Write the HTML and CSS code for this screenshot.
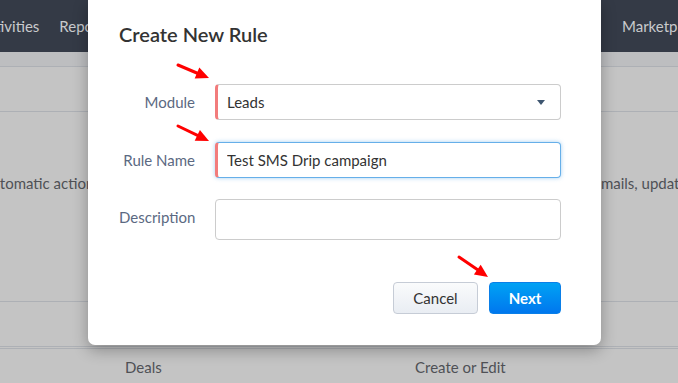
FILE: index.html
```html
<!DOCTYPE html>
<html lang="en">
<head>
    <meta charset="UTF-8">
    <meta name="viewport" content="width=device-width, initial-scale=1.0">
    <title>Create New Rule</title>
    <link rel="stylesheet" href="styles.css">
</head>
<body>
    <div class="app">
        <nav class="nav">
            <div class="nav-left">
                <span>Activities</span>
                <span>Reports</span>
            </div>
            <div class="nav-right">
                <span>Marketplace</span>
            </div>
        </nav>

        <div class="strip"></div>
        <div class="row row-head"></div>
        <div class="row row-desc">
            <span class="desc-left">automatic actions when records are created</span>
            <span class="desc-right">emails, updates</span>
        </div>
        <div class="row row-empty"></div>
        <div class="row row-deals">
            <span>Deals</span>
            <span>Create or Edit</span>
        </div>
    </div>

    <div class="modal">
        <h2>Create New Rule</h2>

        <form class="rule-form">
            <div class="form-row">
                <label for="module">Module</label>
                <div class="field required select">
                    <span>Leads</span>
                    <i class="caret"></i>
                </div>
            </div>
            <div class="form-row">
                <label for="rulename">Rule Name</label>
                <input type="text" id="rulename" class="field required focused" value="Test SMS Drip campaign">
            </div>
            <div class="form-row">
                <label for="description">Description</label>
                <input type="text" id="description" class="field tall">
            </div>

            <div class="actions">
                <button type="button" class="btn btn-cancel">Cancel</button>
                <button type="button" class="btn btn-next">Next</button>
            </div>
        </form>
    </div>

    <!-- setas de destaque -->
    <svg class="arrows" width="678" height="383" viewBox="0 0 678 383">
        <g fill="#f00" stroke="#f00">
            <line x1="178" y1="65" x2="198" y2="73.5" stroke-width="3" stroke-linecap="round"/>
            <polygon points="209,78 194.7,78.5 199.3,67.5" stroke="none"/>
            <line x1="178" y1="126" x2="198" y2="135.6" stroke-width="3" stroke-linecap="round"/>
            <polygon points="209,141 194.7,140.7 199.9,129.9" stroke="none"/>
            <line x1="459" y1="257" x2="478" y2="270" stroke-width="3" stroke-linecap="round"/>
            <polygon points="488,277 473.9,274.5 480.7,264.7" stroke="none"/>
        </g>
    </svg>
</body>
</html>
```

FILE: styles.css
```css
* {
    margin: 0;
    padding: 0;
    box-sizing: border-box;
}

body {
    font-family: Lato, "Liberation Sans", sans-serif;
    background: #c4c4c4;
    width: 678px;
    height: 383px;
    overflow: hidden;
    position: relative;
}

.app {
    color: #4f5156;
    font-size: 15px;
    line-height: 18px;
}

.nav {
    display: flex;
    height: 52px;
    background: #343a46;
    color: #c9cacd;
    align-items: center;
    white-space: nowrap;
}

.nav-left {
    display: flex;
    gap: 20px;
    margin-left: -22px;
    flex: 0 0 644px;
}

.nav-right {
    display: flex;
    gap: 20px;
}

.strip {
    height: 15px;
    background: #bdbec0;
    border-bottom: 1px solid #adb0b5;
}

.row {
    border-bottom: 1px solid #adb0b5;
}

.row-head {
    height: 45px;
}

.row-desc {
    height: 190px;
    display: flex;
    align-items: flex-start;
    padding-top: 62px;
    white-space: nowrap;
    overflow: hidden;
}

.desc-left {
    margin-left: -16px;
    flex: 0 0 626px;
}

.desc-right {
    margin-left: -17px;
}

.row-empty {
    height: 47px;
    border-bottom: 3px double #adb0b5;
}

.row-deals {
    height: 34px;
    border-bottom: none;
    display: grid;
    grid-template-columns: 290px 1fr;
    align-items: start;
    padding: 9px 0 0 125px;
}

.modal {
    position: absolute;
    left: 88px;
    top: 0;
    width: 513px;
    background: #fff;
    border-radius: 0 0 7px 7px;
    box-shadow: 0 5px 15px rgba(0, 0, 0, 0.3);
    padding: 22px 40px 31px 31px;
}

.modal h2 {
    font-size: 20px;
    line-height: 24px;
    font-weight: 600;
    color: #333;
}

.rule-form {
    margin-top: 38px;
}

.form-row {
    display: flex;
    gap: 20px;
    align-items: flex-start;
    margin-bottom: 22px;
}

.form-row:nth-child(2) {
    margin-bottom: 21px;
}

.form-row:nth-child(3) {
    margin-bottom: 0;
}

.form-row label {
    flex: 0 0 76px;
    text-align: right;
    line-height: 36px;
    font-size: 15px;
    color: #5b6982;
    white-space: nowrap;
}

.field {
    width: 346px;
    height: 36px;
    border: 1px solid #ccc;
    border-radius: 4px;
    padding: 0 12px;
    font-family: Lato, "Liberation Sans", sans-serif;
    font-size: 15px;
    color: #333;
    background: #fff;
    outline: none;
}

.field.required {
    border-left: 3px solid #f27c7c;
    padding-left: 9px;
}

.field.focused {
    border-color: #66afe9;
    border-left-color: #f27c7c;
    box-shadow: 0 0 4px rgba(102, 175, 233, 0.6);
}

.field.tall {
    height: 41px;
}

.select {
    display: flex;
    align-items: center;
    justify-content: space-between;
}

.caret {
    width: 0;
    height: 0;
    border-left: 4px solid transparent;
    border-right: 4px solid transparent;
    border-top: 5px solid #3e5670;
    margin-right: 3px;
}

.actions {
    display: flex;
    justify-content: flex-end;
    gap: 11px;
    margin-top: 42px;
}

.btn {
    height: 32px;
    border-radius: 4px;
    font-family: Lato, "Liberation Sans", sans-serif;
    font-size: 15px;
    cursor: pointer;
}

.btn-cancel {
    width: 85px;
    color: #333;
    background: linear-gradient(#fafbfc, #e9edf3);
    border: 1px solid #c6ccd6;
}

.btn-next {
    width: 72px;
    color: #fff;
    font-weight: 700;
    background: linear-gradient(#00a2f4, #0077ee);
    border: 1px solid #0a7fe8;
}

.arrows {
    position: absolute;
    left: 0;
    top: 0;
    pointer-events: none;
}
```
